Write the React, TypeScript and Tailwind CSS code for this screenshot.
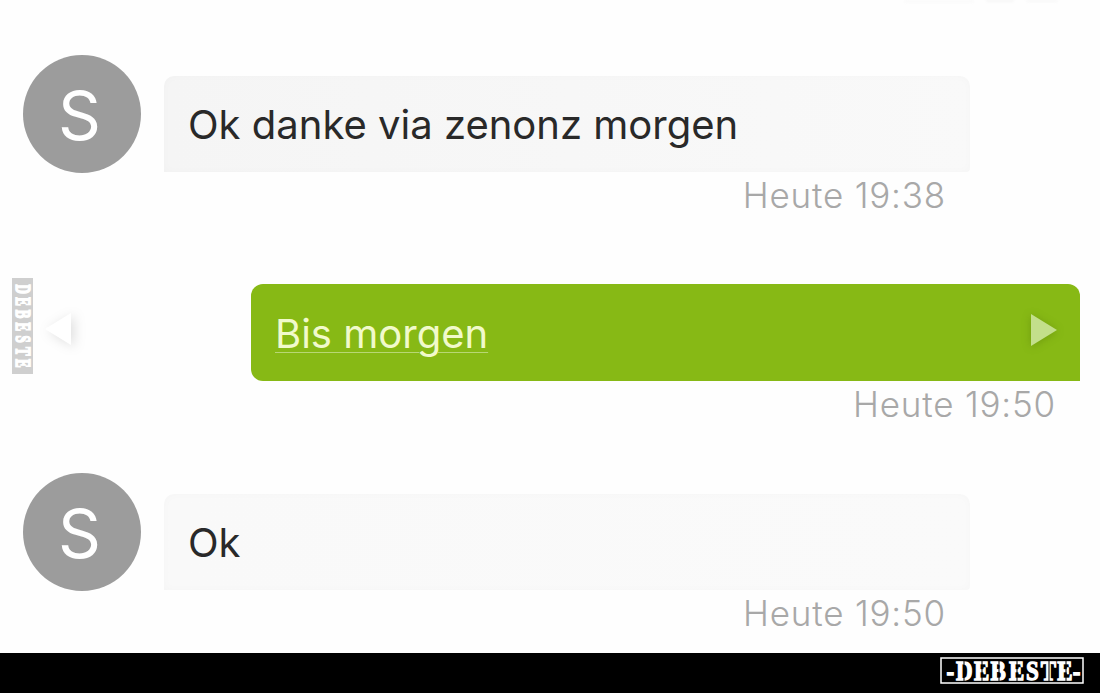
import clsx from "clsx";

type Message = {
  text: string;
  time: string;
  own?: boolean;
  tone?: string;
};

const messages: Message[] = [
  {
    text: "Ok danke via zenonz morgen",
    time: "Heute 19:38",
    tone: "from-[#f5f5f5] to-[#f9f9f9]",
  },
  { text: "Bis morgen", time: "Heute 19:50", own: true },
  { text: "Ok", time: "Heute 19:50", tone: "from-[#f9f9f9] to-[#fafafa]" },
];

const Avatar = () => (
  <div className="flex h-[118px] w-[118px] shrink-0 items-center justify-center rounded-full bg-[#9c9c9c]">
    <span className="mr-[5px] mt-[2px] text-[67px] leading-none text-white">S</span>
  </div>
);

const PlayIcon = () => (
  <svg width="28" height="34" viewBox="0 0 28 34" className="drop-shadow-[0_1px_4px_rgba(60,90,0,0.3)]">
    <path d="M1 1 L27 17 L1 33 Z" fill="#c3df8b" />
  </svg>
);

const BackIcon = () => (
  <svg width="28" height="34" viewBox="0 0 28 34" className="drop-shadow-[3px_2px_6px_rgba(0,0,0,0.13)]">
    <path d="M27 1 L1 17 L27 33 Z" fill="#fff" />
  </svg>
);

const Time = ({ value }: { value: string }) => (
  <div className="text-right text-[35px] font-light leading-[47px] tracking-[0.8px] text-[#a8a8a8]">
    {value}
  </div>
);

const ReceivedMessage = ({ text, time, tone }: Message) => (
  <div className="flex h-[209px] pl-[23px]">
    <Avatar />
    <div className="ml-[23px] w-[806px] pt-[21px]">
      <div
        className={clsx(
          "flex h-[96px] items-center rounded-t-[10px] rounded-br-[4px] bg-gradient-to-r pl-[24px] pt-[2px] text-[40px] text-[#292929] shadow-[inset_0_0_10px_rgba(0,0,0,0.018)]",
          tone
        )}
      >
        {text}
      </div>
      <div className="pr-[24px]">
        <Time value={time} />
      </div>
    </div>
  </div>
);

const OwnMessage = ({ text, time }: Message) => (
  <div className="flex h-[209px] pl-[251px] pt-[20px]">
    <div className="w-[829px]">
      <div className="flex h-[97px] items-center justify-between rounded-t-[12px] rounded-bl-[12px] bg-[#87b915] pl-[24px] pr-[22px] pt-[2px] text-[40px] text-[#f1facb]">
        <span className="underline decoration-[#b8d774] decoration-1 underline-offset-[4px]">{text}</span>
        <div className="mb-[8px]">
          <PlayIcon />
        </div>
      </div>
      <div className="pr-[24px]">
        <Time value={time} />
      </div>
    </div>
  </div>
);

const SideBadge = () => (
  <svg width="21" height="96" viewBox="0 0 21 96">
    <rect width="21" height="96" fill="#cfcfcf" />
    <g transform="translate(3.5 0) rotate(90) scale(0.6 1)">
      <text
        x="11 32 53 74 96 115 135"
        y="0"
        fill="#fff"
        stroke="#fff"
        strokeWidth="1.7"
        fontFamily="Liberation Serif, serif"
        fontWeight="700"
        fontSize="21.5"
      >
        DEBESTE
      </text>
    </g>
  </svg>
);

// x positions of the stencil bridges in the logo letters
const bridges = [24, 42, 59, 77, 109, 126];

const Logo = () => (
  <svg width="144" height="28" viewBox="0 0 144 28" className="block">
    <rect x="1" y="1" width="142" height="25" fill="none" stroke="#fff" strokeWidth="1.5" />
    <g transform="scale(0.82 1)">
      <text
        x="8 19.5 41.5 61.5 84 105 123 143 162"
        y="23"
        fill="#fff"
        stroke="#fff"
        strokeWidth="1.3"
        fontFamily="Liberation Serif, serif"
        fontWeight="700"
        fontSize="28"
      >
        -DEBESTE-
      </text>
    </g>
    {bridges.map((x) => (
      <path key={x} d={`M${x} 3V24`} stroke="#000" strokeWidth="1" />
    ))}
  </svg>
);

const App = () => {
  return (
    <div className="relative flex h-[693px] w-[1100px] flex-col overflow-hidden bg-[#fefefe] font-['Inter',sans-serif]">
      <div className="absolute right-[42px] top-0 flex gap-3 blur-[1px]">
        <div className="h-[3px] w-[70px] rounded-b-full bg-[#fafafa]" />
        <div className="h-[2px] w-[28px] rounded-b-full bg-[#f5f5f5]" />
        <div className="h-[2px] w-[32px] rounded-b-full bg-[#f7f7f7]" />
      </div>
      <main className="h-[653px] overflow-hidden pt-[55px]">
        {messages.map((message, index) =>
          message.own ? (
            <OwnMessage key={index} {...message} />
          ) : (
            <ReceivedMessage key={index} {...message} />
          )
        )}
      </main>
      <div className="absolute left-[12px] top-[278px]">
        <SideBadge />
      </div>
      <div className="absolute left-[44px] top-[312px]">
        <BackIcon />
      </div>
      <footer className="flex h-[40px] justify-end bg-black pr-[16px] pt-[4px]">
        <Logo />
      </footer>
    </div>
  );
};

export default App;
